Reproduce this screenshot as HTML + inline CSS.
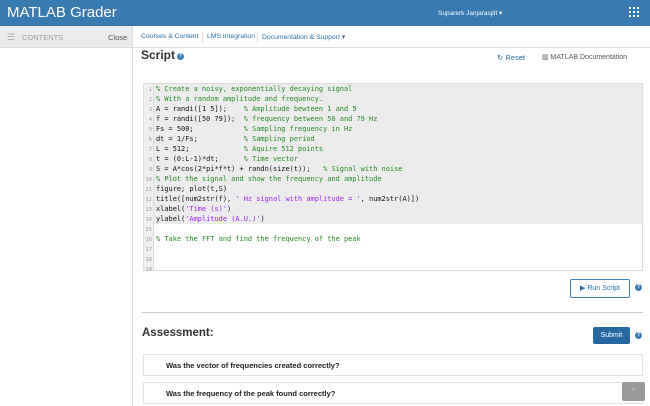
<!DOCTYPE html><html><head><style>
*{box-sizing:border-box;margin:0;padding:0}
body{width:650px;height:406px;overflow:hidden;font-family:"Liberation Sans",sans-serif;background:#fff;position:relative}
.hdr{position:absolute;left:0;top:0;width:650px;height:26px;background:#3879b0;color:#fff}
.nav{position:absolute;top:26px;left:0;width:650px;height:22px;border-bottom:1px solid #ddd;background:#fff}
.side{position:absolute;left:0;top:26px;width:133px;height:380px;background:#fff;border-right:1px solid #ddd}
.sidetop{height:22px;background:#ececec;border-bottom:1px solid #ddd;font-size:7.5px;color:#999;position:relative}
.a{position:absolute;font-size:6.8px;color:#2a6fa8}
.code{position:absolute;left:143px;top:83px;width:500px;height:188px;border:1px solid #ddd;background:#fff;font-family:"DejaVu Sans Mono","Liberation Mono",monospace;font-size:6.95px}
.gut{position:absolute;left:0;top:0;width:10px;height:100%;background:#f0f0f0;border-right:1px solid #ddd}
.gray{position:absolute;left:10px;top:0;right:0;height:140px;background:#ececec}
.ln{position:absolute;left:0;height:10px;line-height:10px;white-space:pre;color:#111}
.ln b{font-weight:normal;display:inline-block;width:8px;text-align:right;color:#999;font-size:5.5px;margin-right:4px}
.c{color:#228b22}.s{color:#a020f0}
.q{position:absolute;left:143px;width:500px;height:22px;border:1px solid #e3e3e3;font-size:7.5px;font-weight:bold;padding-left:22px;line-height:21px;color:#222}
.help{position:absolute;width:7px;height:7px;border-radius:50%;background:#3a7db3;color:#fff;font-size:5px;text-align:center;line-height:7px;font-weight:bold}
</style></head><body>
<div class="hdr"><div style="position:absolute;left:7px;top:4px;font-size:15px">MATLAB Grader</div>
<div style="position:absolute;left:438px;top:9px;font-size:6.5px">Suparerk Janjarasjitt ▾</div>
<div style="position:absolute;left:629px;top:7px;width:10px;height:10px;display:grid;grid-template-columns:repeat(3,2px);gap:2px">
<i style="background:#fff"></i><i style="background:#fff"></i><i style="background:#fff"></i><i style="background:#fff"></i><i style="background:#fff"></i><i style="background:#fff"></i><i style="background:#fff"></i><i style="background:#fff"></i><i style="background:#fff"></i></div></div>
<div class="nav">
<span class="a" style="left:141px;top:7px">Courses &amp; Content</span>
<span style="position:absolute;left:202px;top:5px;height:12px;border-left:1px solid #ddd"></span>
<span class="a" style="left:207px;top:7px">LMS Integration</span>
<span style="position:absolute;left:257px;top:5px;height:12px;border-left:1px solid #ddd"></span>
<span class="a" style="left:262px;top:7px">Documentation &amp; Support ▾</span></div>
<div class="side"><div class="sidetop"><span style="position:absolute;left:7px;top:6px;font-size:9px;color:#aaa">☰</span><span style="position:absolute;left:22px;top:7px">CONTENTS</span><span style="position:absolute;left:108px;top:7px;color:#555">Close</span></div></div>
<div style="position:absolute;left:141px;top:48px;font-size:12px;font-weight:bold;color:#333">Script</div>
<div class="help" style="left:177px;top:53px">?</div>
<div style="position:absolute;left:497px;top:53px;font-size:7.5px;color:#2a6fa8">↻ Reset</div>
<div style="position:absolute;left:542px;top:53px;font-size:7px;color:#555">▥ MATLAB Documentation</div>
<div class="code"><div class="gut"></div><div class="gray"></div>
<div class="ln" style="top:0"><b>1</b><span class="c">% Create a noisy, exponentially decaying signal</span></div>
<div class="ln" style="top:10px"><b>2</b><span class="c">% With a random amplitude and frequency.</span></div>
<div class="ln" style="top:20px"><b>3</b>A = randi([1 5]);    <span class="c">% Amplitude bewteen 1 and 5</span></div>
<div class="ln" style="top:30px"><b>4</b>f = randi([50 79]);  <span class="c">% frequency between 50 and 79 Hz</span></div>
<div class="ln" style="top:40px"><b>5</b>Fs = 500;            <span class="c">% Sampling frequency in Hz</span></div>
<div class="ln" style="top:50px"><b>6</b>dt = 1/Fs;           <span class="c">% Sampling period</span></div>
<div class="ln" style="top:60px"><b>7</b>L = 512;             <span class="c">% Aquire 512 points</span></div>
<div class="ln" style="top:70px"><b>8</b>t = (0:L-1)*dt;      <span class="c">% Time vector</span></div>
<div class="ln" style="top:80px"><b>9</b>S = A*cos(2*pi*f*t) + randn(size(t));   <span class="c">% Signal with noise</span></div>
<div class="ln" style="top:90px"><b>10</b><span class="c">% Plot the signal and show the frequency and amplitude</span></div>
<div class="ln" style="top:100px"><b>11</b>figure; plot(t,S)</div>
<div class="ln" style="top:110px"><b>12</b>title([num2str(f), <span class="s">' Hz signal with amplitude = '</span>, num2str(A)])</div>
<div class="ln" style="top:120px"><b>13</b>xlabel(<span class="s">'Time (s)'</span>)</div>
<div class="ln" style="top:130px"><b>14</b>ylabel(<span class="s">'Amplitude (A.U.)'</span>)</div>
<div class="ln" style="top:140px"><b>15</b></div>
<div class="ln" style="top:150px"><b>16</b><span class="c">% Take the FFT and find the frequency of the peak</span></div>
<div class="ln" style="top:160px"><b>17</b></div>
<div class="ln" style="top:170px"><b>18</b></div>
<div class="ln" style="top:180px"><b>19</b></div>
</div>
<div style="position:absolute;left:570px;top:279px;width:60px;height:19px;border:1px solid #3a7db3;border-radius:2px;font-size:7px;color:#2a6fa8;text-align:center;line-height:17px">▶ Run Script</div>
<div class="help" style="left:635px;top:284px">?</div>
<div style="position:absolute;left:142px;top:312px;width:501px;border-top:1px solid #ccc"></div>
<div style="position:absolute;left:142px;top:327px;font-size:11.5px;font-weight:bold;color:#333">Assessment:</div>
<div style="position:absolute;left:593px;top:327px;width:37px;height:17px;background:#2768a0;border-radius:2px;font-size:7px;color:#fff;text-align:center;line-height:17px">Submit</div>
<div class="help" style="left:635px;top:332px">?</div>
<div class="q" style="top:354px">Was the vector of frequencies created correctly?</div>
<div class="q" style="top:382px">Was the frequency of the peak found correctly?</div>
<div style="position:absolute;left:622px;top:382px;width:23px;height:19px;background:#999;border-radius:2px;color:#ddd;font-size:6px;text-align:center;line-height:19px">^</div>
</body></html>
